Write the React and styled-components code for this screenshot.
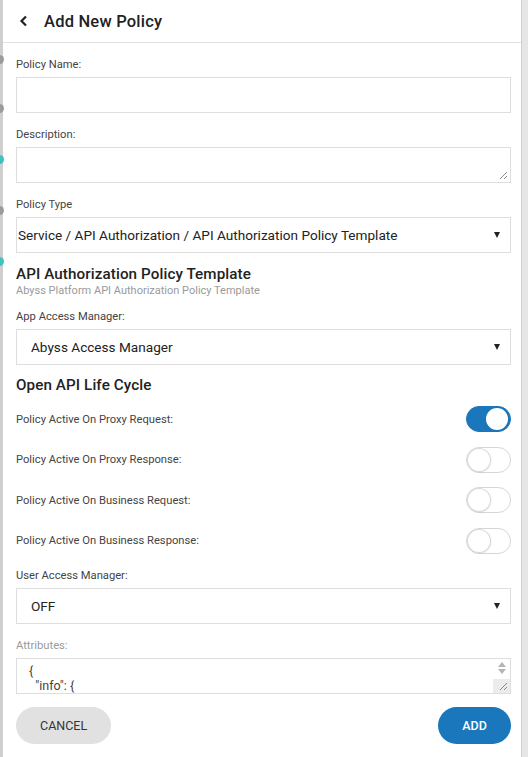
import React, { useState } from 'react'
import styled, { createGlobalStyle } from 'styled-components'

const GlobalStyle = createGlobalStyle`
  html, body {
    margin: 0;
    padding: 0;
    background: #d9d9d9;
    font-family: Roboto, "Liberation Sans", Arial, sans-serif;
  }
  * { box-sizing: border-box; }
`

const Page = styled.div`
  display: flex;
  width: 528px;
  height: 757px;
  overflow: hidden;
  background: #e6e6e6;
`

const Backdrop = styled.div`
  width: 3px;
  position: relative;
  background: #cfcfcf;
  & span {
    position: absolute;
    left: -5px;
    width: 9px;
    height: 9px;
    border-radius: 50%;
  }
`

const Panel = styled.div`
  width: 519px;
  height: 757px;
  background: #fff;
  display: flex;
  flex-direction: column;
  border-right: 1px solid #cfcfcf;
`

const Header = styled.div`
  height: 43px;
  display: flex;
  align-items: center;
  gap: 15px;
  padding-left: 16px;
  border-bottom: 1px solid #e2e2e2;
  & h1 {
    margin: 0;
    font-size: 16.5px;
    font-weight: 500;
    color: #222;
    letter-spacing: 0.2px;
  }
`

const Body = styled.div`
  flex: 1;
  padding: 0 10px 0 13px;
  display: flex;
  flex-direction: column;
`

const Label = styled.div`
  font-size: 11.2px;
  color: ${p => (p.muted ? '#9a9a9a' : '#444')};
  margin-top: ${p => p.top || 15}px;
  margin-bottom: 6px;
`

const Input = styled.div`
  height: 36px;
  border: 1px solid #dedede;
  background: #fff;
  position: relative;
  display: flex;
  align-items: center;
  padding-left: ${p => p.pad || 14}px;
  padding-right: 10px;
  font-size: 13.6px;
  color: #222;
`

const Caret = styled.span`
  margin-left: auto;
  width: 0;
  height: 0;
  border-left: 3.5px solid transparent;
  border-right: 3.5px solid transparent;
  border-top: 6px solid #222;
`

const Grip = styled.svg`
  position: absolute;
  right: 2px;
  bottom: 2px;
`

const Section = styled.div`
  margin-top: ${p => p.top || 14}px;
  & h2 {
    margin: 0;
    font-size: 15.2px;
    font-weight: 500;
    color: #222;
    letter-spacing: 0.1px;
  }
  & p {
    margin: 1px 0 0;
    font-size: 11px;
    color: #9a9a9a;
  }
`

const Row = styled.div`
  height: 40.5px;
  display: flex;
  align-items: center;
  justify-content: space-between;
  font-size: 11.2px;
  color: #444;
`

const Toggle = styled.button`
  width: 45px;
  height: 26px;
  border-radius: 13px;
  padding: 0;
  border: 1px solid ${p => (p.on ? '#1a77bb' : '#d6d6d6')};
  background: ${p => (p.on ? '#1a77bb' : '#fff')};
  position: relative;
  cursor: pointer;
  &::after {
    content: '';
    position: absolute;
    top: 1px;
    left: ${p => (p.on ? '19px' : '1px')};
    width: 22px;
    height: 22px;
    border-radius: 50%;
    background: #fff;
    box-shadow: 0 0 0 1px ${p => (p.on ? '#1a77bb' : '#d9d9d9')}, 1px 1px 2px rgba(0,0,0,0.12);
  }
`

const Code = styled.div`
  height: 36px;
  border: 1px solid #dedede;
  position: relative;
  overflow: hidden;
  font-size: 12.5px;
  line-height: 15px;
  color: #444;
  padding: 4px 0 0 12px;
  white-space: pre;
`

const Scroll = styled.div`
  position: absolute;
  right: 0;
  top: 0;
  bottom: 0;
  width: 17px;
  background: #fff;
  display: flex;
  flex-direction: column;
  align-items: center;
  padding-top: 3px;
  gap: 2px;
  & i {
    width: 0;
    height: 0;
    border-left: 4px solid transparent;
    border-right: 4px solid transparent;
  }
  & i.up { border-bottom: 5px solid #b5b5b5; }
  & i.down { border-top: 5px solid #b5b5b5; }
  & b {
    margin-top: auto;
    width: 17px;
    height: 14px;
    background: #ececec;
  }
`

const Footer = styled.div`
  display: flex;
  justify-content: space-between;
  margin-top: 13px;
`

const Button = styled.button`
  height: 37px;
  border: none;
  border-radius: 19px;
  font-family: inherit;
  font-size: 12.5px;
  padding: 0 ${p => (p.primary ? 23 : 24)}px;
  min-width: ${p => (p.primary ? 73 : 95)}px;
  background: ${p => (p.primary ? '#1a77bb' : '#e1e1e1')};
  color: ${p => (p.primary ? '#fff' : '#333')};
  font-weight: ${p => (p.primary ? 500 : 400)};
  cursor: pointer;
`

const rows = [
  ['Policy Active On Proxy Request:', true],
  ['Policy Active On Proxy Response:', false],
  ['Policy Active On Business Request:', false],
  ['Policy Active On Business Response:', false],
]

function ResizeGrip() {
  return (
    <Grip width="9" height="9" viewBox="0 0 9 9">
      <path d="M1 8 L8 1 M5 8 L8 5" stroke="#8a8a8a" strokeWidth="1" />
    </Grip>
  )
}

export default function App() {
  const [states, setStates] = useState(rows.map(r => r[1]))

  return (
    <Page>
      <GlobalStyle />
      <Backdrop>
        <span style={{ top: 55, background: '#9b9b9b' }} />
        <span style={{ top: 104, background: '#9b9b9b' }} />
        <span style={{ top: 155, background: '#3fc1c0' }} />
        <span style={{ top: 206, background: '#9b9b9b' }} />
        <span style={{ top: 257, background: '#3fc1c0' }} />
      </Backdrop>
      <Panel>
        <Header>
          <svg width="10" height="12" viewBox="0 0 10 12">
            <path d="M7 1.5 L2.5 6 L7 10.5" fill="none" stroke="#222" strokeWidth="2.2" />
          </svg>
          <h1>Add New Policy</h1>
        </Header>
        <Body>
          <Label>Policy Name:</Label>
          <Input />
          <Label>Description:</Label>
          <Input>
            <ResizeGrip />
          </Input>
          <Label>Policy Type</Label>
          <Input pad={1}>
            Service / API Authorization / API Authorization Policy Template
            <Caret />
          </Input>
          <Section top={12}>
            <h2>API Authorization Policy Template</h2>
            <p>Abyss Platform API Authorization Policy Template</p>
          </Section>
          <Label top={13}>App Access Manager:</Label>
          <Input>
            Abyss Access Manager
            <Caret />
          </Input>
          <Section top={11}>
            <h2>Open API Life Cycle</h2>
          </Section>
          <div style={{ marginTop: 5 }}>
            {rows.map(([label], i) => (
              <Row key={label}>
                {label}
                <Toggle
                  on={states[i] ? 1 : 0}
                  onClick={() => setStates(s => s.map((v, j) => (j === i ? !v : v)))}
                />
              </Row>
            ))}
          </div>
          <Label top={8}>User Access Manager:</Label>
          <Input>
            OFF
            <Caret />
          </Input>
          <Label muted top={15}>Attributes:</Label>
          <Code>
            {'{\n  "info": {'}
            <Scroll>
              <i className="up" />
              <i className="down" />
              <b />
            </Scroll>
            <ResizeGrip />
          </Code>
          <Footer>
            <Button>CANCEL</Button>
            <Button primary>ADD</Button>
          </Footer>
        </Body>
      </Panel>
    </Page>
  )
}
